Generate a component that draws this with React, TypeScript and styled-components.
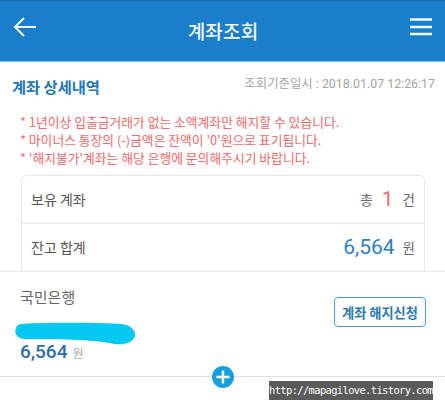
import React from "react";
import styled, { createGlobalStyle } from "styled-components";

const Global = createGlobalStyle`
  html, body { margin: 0; padding: 0; background: #fff; }
  body { font-family: "Noto Sans CJK KR", "Noto Sans", sans-serif; }
`;

const Page = styled.div`
  position: relative;
  width: 445px;
  height: 405px;
  overflow: hidden;
  display: flex;
  flex-direction: column;
  background: #fff;
`;

const Header = styled.header`
  height: 62px;
  box-sizing: border-box;
  flex: none;
  display: flex;
  align-items: center;
  justify-content: space-between;
  padding: 0 12px 0 13px;
  background: #1a7ecb;
  border-top: 1px solid #0f69a8;
  border-bottom: 1px solid #7fc0ea;
`;

const IconSlot = styled.div`
  width: 24px;
  height: 24px;
  margin-top: -9px;
  display: flex;
`;

const Title = styled.h1`
  margin: 0;
  color: #f4f9fd;
  font-size: 19px;
  font-weight: 500;
  line-height: 24px;
  letter-spacing: 0.2px;
`;

const Content = styled.main`
  flex: none;
  height: 209px;
  padding: 13px 10px 0 12px;
  box-sizing: border-box;
  overflow: hidden;
`;

const SectionHead = styled.div`
  display: flex;
  justify-content: space-between;
  align-items: flex-start;
  height: 24px;
`;

const SectionTitle = styled.h2`
  margin: 0;
  color: #2276b5;
  font-size: 15.3px;
  font-weight: 700;
  line-height: 22px;
`;

const Stamp = styled.span`
  color: #a3a3a3;
  font-size: 12.4px;
  line-height: 18px;
  font-family: "Roboto", "Noto Sans CJK KR", sans-serif;
`;

const Notes = styled.ul`
  list-style: none;
  margin: 14px 0 0 8px;
  padding: 0;
`;

const Note = styled.li`
  color: #f4676a;
  font-size: 12.8px;
  line-height: 18px;
  white-space: nowrap;
`;

const Card = styled.section`
  margin: 8px 0 0 9px;
  width: 404px;
  box-sizing: border-box;
  border: 1px solid #e5e8ea;
  border-bottom: 0;
  border-radius: 6px 6px 0 0;
`;

const Row = styled.div<{ $divider?: boolean }>`
  height: 48px;
  box-sizing: border-box;
  display: flex;
  align-items: center;
  justify-content: space-between;
  padding: 0 9px 2px 9px;
  border-bottom: ${(p) => (p.$divider ? "1px solid #e5e8ea" : "0")};
`;

const RowLabel = styled.span`
  color: #555;
  font-size: 14px;
`;

const RowValue = styled.span`
  display: flex;
  align-items: center;
  gap: 8px;
  color: #666;
  font-size: 13.5px;
`;

const Count = styled.b`
  color: #ee6a70;
  font: 400 21px "Roboto", sans-serif;
  margin: 0 1px;
`;

const Amount = styled.b`
  color: #2a80c2;
  font: 400 21px "Roboto", sans-serif;
`;

const Panel = styled.section`
  position: relative;
  flex: none;
  height: 106px;
  box-sizing: border-box;
  padding: 14px 20px 0 20px;
  background: #fff;
  border-top: 1px solid #e4e7e9;
  border-bottom: 1px solid #e2e2e2;
  display: flex;
  justify-content: space-between;
`;

const Account = styled.div`
  display: flex;
  flex-direction: column;
`;

const BankName = styled.span`
  color: #666;
  font-size: 15px;
  line-height: 22px;
`;

const Scribble = styled.svg`
  width: 122px;
  height: 24px;
  margin: 14px 0 0 -6px;
  display: block;
`;

const Balance = styled.div`
  display: flex;
  align-items: baseline;
  gap: 5px;
  margin-top: -6px;
`;

const BalanceAmount = styled.span`
  color: #2c6fa8;
  font: 500 19px/24px "Roboto", sans-serif;
`;

const Won = styled.span`
  color: #aaa;
  font-size: 12px;
`;

const CancelButton = styled.button`
  align-self: flex-start;
  margin: 11px -1px 0 0;
  width: 92px;
  height: 30px;
  padding: 0;
  background: #fff;
  border: 1px solid #4f97cc;
  border-radius: 4px;
  color: #2d78ae;
  font: 700 13.2px "Noto Sans CJK KR", sans-serif;
  white-space: nowrap;
`;

const AddBubble = styled.span`
  position: absolute;
  left: 212px;
  bottom: -12px;
  width: 22px;
  height: 22px;
  border-radius: 50%;
  background: #189fe0;
  display: flex;
  align-items: center;
  justify-content: center;
`;

const Watermark = styled.div`
  position: absolute;
  left: 269px;
  top: 381px;
  width: 164px;
  height: 19px;
  background: #5a5a5a;
  color: #fff;
  font: 10.5px/19px "DejaVu Sans Mono", monospace;
  letter-spacing: -0.67px;
  text-align: center;
  white-space: nowrap;
`;

export default function App() {
  return (
    <Page>
      <Global />
      <Header>
        <IconSlot>
          <svg width="24" height="24" viewBox="0 0 24 24" fill="none" stroke="#f4f9fd" strokeWidth="2">
            <path d="M23 12H2M11 3l-9 9 9 9" />
          </svg>
        </IconSlot>
        <Title>계좌조회</Title>
        <IconSlot>
          <svg width="24" height="24" viewBox="0 0 24 24" fill="none" stroke="#f4f9fd" strokeWidth="2.6">
            <path d="M1 4.5h22M1 12h22M1 19h22" />
          </svg>
        </IconSlot>
      </Header>
      <Content>
        <SectionHead>
          <SectionTitle>계좌 상세내역</SectionTitle>
          <Stamp>조회기준일시 : 2018.01.07 12:26:17</Stamp>
        </SectionHead>
        <Notes>
          <Note>* 1년이상 입출금거래가 없는 소액계좌만 해지할 수 있습니다.</Note>
          <Note>* 마이너스 통장의 (-)금액은 잔액이 '0'원으로 표기됩니다.</Note>
          <Note>* '해지불가'계좌는 해당 은행에 문의해주시기 바랍니다.</Note>
        </Notes>
        <Card>
          <Row $divider>
            <RowLabel>보유 계좌</RowLabel>
            <RowValue>총 <Count>1</Count> 건</RowValue>
          </Row>
          <Row>
            <RowLabel>잔고 합계</RowLabel>
            <RowValue><Amount>6,564</Amount> 원</RowValue>
          </Row>
        </Card>
      </Content>
      <Panel>
        <Account>
          <BankName>국민은행</BankName>
          <Scribble viewBox="0 0 122 24">
            <path d="M8 2C40 0 90 1 108 2C118 3 122 10 121 14C119 21 110 23 100 22C85 18 50 17 10 17C2 16 0 10 2 6C3 3 5 2 8 2Z" fill="#05c8f3" />
          </Scribble>
          <Balance>
            <BalanceAmount>6,564</BalanceAmount>
            <Won>원</Won>
          </Balance>
        </Account>
        <CancelButton>계좌 해지신청</CancelButton>
        <AddBubble>
          <svg width="14" height="14" viewBox="0 0 14 14" stroke="#fff" strokeWidth="2.4">
            <path d="M7 0.5v13M0.5 7h13" />
          </svg>
        </AddBubble>
      </Panel>
      <Watermark>http://mapagilove.tistory.com</Watermark>
    </Page>
  );
}
